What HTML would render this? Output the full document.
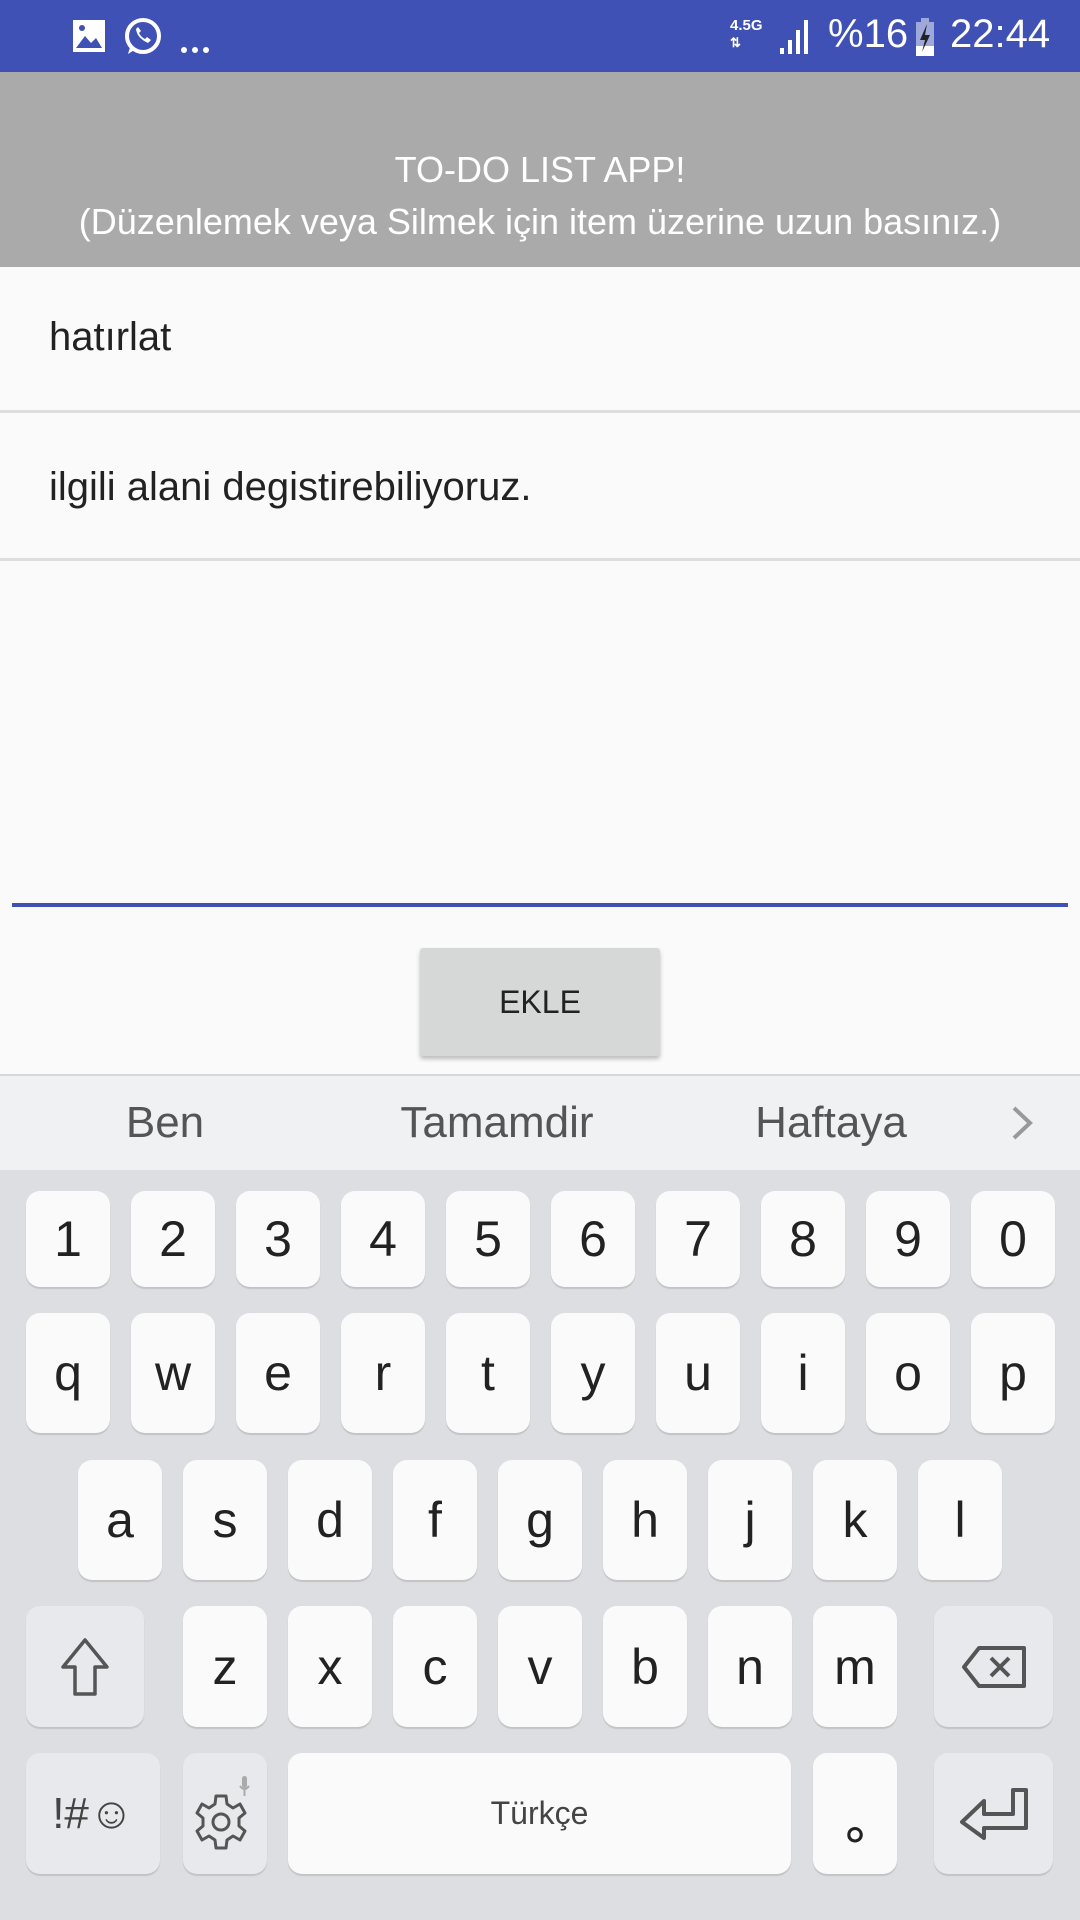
<!DOCTYPE html>
<html><head><meta charset="utf-8"><style>
*{margin:0;padding:0;box-sizing:border-box}
body{width:1080px;height:1920px;position:relative;background:#fafafa;font-family:"Liberation Sans",sans-serif;overflow:hidden}
.a{position:absolute}
.k{position:absolute;background:#fafafa;border-radius:14px;box-shadow:0 2px 1px rgba(0,0,0,.12);display:flex;align-items:center;justify-content:center;font-size:50px;color:#222}
.f{background:#e8e9ec}
.sg{position:absolute;top:1075px;height:95px;line-height:95px;font-size:44px;color:#555;transform:translateX(-50%)}
</style></head><body>
<div class="a" style="left:0;top:0;width:1080px;height:72px;background:#3f51b5"></div>
<svg class="a" style="left:70px;top:16px" width="150" height="42" viewBox="0 0 150 42">
<rect x="3" y="4" width="32" height="32" fill="#fff"/><path d="M6 32 L15 20 L21 27 L26 22 L32 32Z" fill="#3f51b5"/><circle cx="12" cy="12" r="3" fill="#3f51b5"/>
<circle cx="73" cy="20" r="16" fill="none" stroke="#fff" stroke-width="4"/><path d="M58 38 L61 28 L66 33Z" fill="#fff"/><path d="M66 13 q1 9 12 14 l3 -3 l-4 -3 l-2 2 q-4 -2 -6 -6 l2 -2 l-3 -4z" fill="#fff"/>
<circle cx="114" cy="34" r="3" fill="#fff"/><circle cx="125" cy="34" r="3" fill="#fff"/><circle cx="136" cy="34" r="3" fill="#fff"/>
</svg>
<div class="a" style="left:730px;top:17px;color:#fff;font-size:15px;font-weight:bold">4.5G<br><span style="font-size:13px">⇅</span></div>
<svg class="a" style="left:778px;top:18px" width="40" height="38"><rect x="2" y="30" width="4" height="6" fill="#fff"/><rect x="10" y="22" width="4" height="14" fill="#fff"/><rect x="18" y="12" width="4" height="24" fill="#fff"/><rect x="26" y="2" width="4" height="34" fill="#fff"/></svg>
<div class="a" style="left:828px;top:12px;color:#fff;font-size:40px">%16</div>
<svg class="a" style="left:916px;top:18px" width="18" height="38"><rect x="0" y="4" width="18" height="34" fill="#9fa8da"/><rect x="5" y="0" width="8" height="4" fill="#9fa8da"/><rect x="0" y="28" width="18" height="10" fill="#fff"/><path d="M11 6 L4 22 L9 22 L6 34 L14 17 L9 17Z" fill="#222"/></svg>
<div class="a" style="left:950px;top:12px;color:#fff;font-size:40px">22:44</div>

<div class="a" style="left:0;top:72px;width:1080px;height:195px;background:#aaa"></div>
<div class="a" style="left:0;top:144px;width:1080px;text-align:center;color:#fff;font-size:36px;line-height:52px">TO-DO LIST APP!<br>(Düzenlemek veya Silmek için item üzerine uzun basınız.)</div>

<div class="a" style="left:49px;top:315px;font-size:40px;color:#222">hatırlat</div>
<div class="a" style="left:0;top:410px;width:1080px;height:3px;background:#ddd"></div>
<div class="a" style="left:49px;top:465px;font-size:40px;color:#222">ilgili alani degistirebiliyoruz.</div>
<div class="a" style="left:0;top:558px;width:1080px;height:3px;background:#ddd"></div>
<div class="a" style="left:12px;top:903px;width:1056px;height:4px;background:#3f51b5"></div>
<div class="a" style="left:420px;top:948px;width:240px;height:108px;background:#d6d7d7;border-radius:3px;box-shadow:0 3px 4px rgba(0,0,0,.25);text-align:center;line-height:108px;font-size:32px;color:#222">EKLE</div>

<div class="a" style="left:0;top:1074px;width:1080px;height:2px;background:#d8d8d8"></div>
<div class="a" style="left:0;top:1076px;width:1080px;height:94px;background:#f0f1f3"></div>
<div class="sg" style="left:165px">Ben</div>
<div class="sg" style="left:497px">Tamamdir</div>
<div class="sg" style="left:831px">Haftaya</div>
<svg class="a" style="left:1010px;top:1105px" width="26" height="36"><path d="M4 3 L20 18 L4 33" fill="none" stroke="#999" stroke-width="4"/></svg>
<div class="a" style="left:0;top:1170px;width:1080px;height:750px;background:#dddee1"></div>

<div class="k" style="left:26px;top:1191px;width:84px;height:96px">1</div>
<div class="k" style="left:131px;top:1191px;width:84px;height:96px">2</div>
<div class="k" style="left:236px;top:1191px;width:84px;height:96px">3</div>
<div class="k" style="left:341px;top:1191px;width:84px;height:96px">4</div>
<div class="k" style="left:446px;top:1191px;width:84px;height:96px">5</div>
<div class="k" style="left:551px;top:1191px;width:84px;height:96px">6</div>
<div class="k" style="left:656px;top:1191px;width:84px;height:96px">7</div>
<div class="k" style="left:761px;top:1191px;width:84px;height:96px">8</div>
<div class="k" style="left:866px;top:1191px;width:84px;height:96px">9</div>
<div class="k" style="left:971px;top:1191px;width:84px;height:96px">0</div>

<div class="k" style="left:26px;top:1313px;width:84px;height:120px">q</div>
<div class="k" style="left:131px;top:1313px;width:84px;height:120px">w</div>
<div class="k" style="left:236px;top:1313px;width:84px;height:120px">e</div>
<div class="k" style="left:341px;top:1313px;width:84px;height:120px">r</div>
<div class="k" style="left:446px;top:1313px;width:84px;height:120px">t</div>
<div class="k" style="left:551px;top:1313px;width:84px;height:120px">y</div>
<div class="k" style="left:656px;top:1313px;width:84px;height:120px">u</div>
<div class="k" style="left:761px;top:1313px;width:84px;height:120px">i</div>
<div class="k" style="left:866px;top:1313px;width:84px;height:120px">o</div>
<div class="k" style="left:971px;top:1313px;width:84px;height:120px">p</div>

<div class="k" style="left:78px;top:1460px;width:84px;height:120px">a</div>
<div class="k" style="left:183px;top:1460px;width:84px;height:120px">s</div>
<div class="k" style="left:288px;top:1460px;width:84px;height:120px">d</div>
<div class="k" style="left:393px;top:1460px;width:84px;height:120px">f</div>
<div class="k" style="left:498px;top:1460px;width:84px;height:120px">g</div>
<div class="k" style="left:603px;top:1460px;width:84px;height:120px">h</div>
<div class="k" style="left:708px;top:1460px;width:84px;height:120px">j</div>
<div class="k" style="left:813px;top:1460px;width:84px;height:120px">k</div>
<div class="k" style="left:918px;top:1460px;width:84px;height:120px">l</div>

<div class="k f" style="left:26px;top:1606px;width:118px;height:121px"><svg width="52" height="60"><path d="M26 3 L48 30 L36 30 L36 57 L16 57 L16 30 L4 30Z" fill="none" stroke="#555" stroke-width="3.5" stroke-linejoin="round"/></svg></div>
<div class="k" style="left:183px;top:1606px;width:84px;height:121px">z</div>
<div class="k" style="left:288px;top:1606px;width:84px;height:121px">x</div>
<div class="k" style="left:393px;top:1606px;width:84px;height:121px">c</div>
<div class="k" style="left:498px;top:1606px;width:84px;height:121px">v</div>
<div class="k" style="left:603px;top:1606px;width:84px;height:121px">b</div>
<div class="k" style="left:708px;top:1606px;width:84px;height:121px">n</div>
<div class="k" style="left:813px;top:1606px;width:84px;height:121px">m</div>
<div class="k f" style="left:934px;top:1606px;width:119px;height:121px"><svg width="66" height="44"><path d="M18 3 L63 3 L63 41 L18 41 L3 22Z" fill="none" stroke="#555" stroke-width="4" stroke-linejoin="round"/><path d="M30 13 L48 31 M48 13 L30 31" stroke="#555" stroke-width="4"/></svg></div>

<div class="k f" style="left:26px;top:1753px;width:134px;height:121px;font-size:44px;color:#444">!#☺</div>
<div class="k f" style="left:183px;top:1753px;width:84px;height:121px"><svg width="64" height="80" viewBox="0 0 64 80"><rect x="49" y="2" width="5" height="12" rx="2.5" fill="#aaa"/><path d="M47 12 q4.5 6 9 0 M51.5 16 v6" stroke="#aaa" stroke-width="2" fill="none"/><g transform="translate(28,48)" fill="none" stroke="#555" stroke-width="3"><circle r="8"/><path d="M-5 -26 L5 -26 L6 -18 L12 -14 L19 -18 L24 -9 L18 -4 L18 4 L24 9 L19 18 L12 14 L6 18 L5 26 L-5 26 L-6 18 L-12 14 L-19 18 L-24 9 L-18 4 L-18 -4 L-24 -9 L-19 -18 L-12 -14 L-6 -18Z" stroke-linejoin="round"/></g></svg></div>
<div class="k" style="left:288px;top:1753px;width:503px;height:121px;font-size:32px;color:#444">Türkçe</div>
<div class="k" style="left:813px;top:1753px;width:84px;height:121px;padding-top:40px">∘</div>
<div class="k f" style="left:934px;top:1753px;width:119px;height:121px"><svg width="72" height="54"><path d="M68 3 L55 3 L55 27 L26 27 L26 14 L4 35 L26 51 L26 41 L68 41Z" fill="none" stroke="#555" stroke-width="4" stroke-linejoin="round"/></svg></div>
</body></html>
